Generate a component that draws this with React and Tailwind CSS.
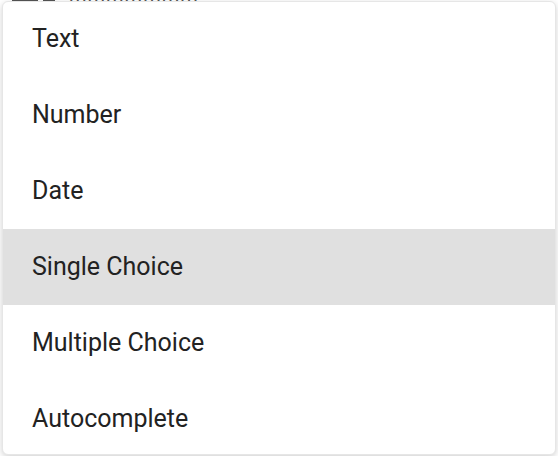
import { useState } from "react";

const options = ["Text", "Number", "Date", "Single Choice", "Multiple Choice", "Autocomplete"];

export default function App() {
  const [active, setActive] = useState("Single Choice");

  return (
    <div className="relative w-[558px] h-[456px] overflow-hidden bg-white font-['Roboto',sans-serif]">
      {/* field underneath the open menu */}
      <div className="absolute left-[12px] top-[-16px] flex items-start gap-[14px] text-[#555]">
        <div className="flex gap-[5px] mt-[-4px]">
          <span className="block w-[26px] h-[22px] bg-[#555]" />
          <span className="block w-[12px] h-[22px] bg-[#555]" />
        </div>
        <span className="text-[20px] leading-[22px] tracking-[1px]">mmmmmmm</span>
      </div>

      <ul className="absolute left-[2px] top-[1px] w-[554px] h-[454px] rounded-[6px] bg-white border border-[#e6e6e6] shadow-[0_2px_6px_rgba(0,0,0,0.18)] overflow-hidden">
        {options.map((o, i) => (
          <li
            key={o}
            onMouseEnter={() => setActive(o)}
            className={`flex items-center h-[76px] pl-[29px] text-[25px] text-[#222] ${i === 0 ? "mt-[-1px]" : ""} ${active === o ? "bg-[#e0e0e0]" : ""}`}
          >
            {o}
          </li>
        ))}
      </ul>
    </div>
  );
}
